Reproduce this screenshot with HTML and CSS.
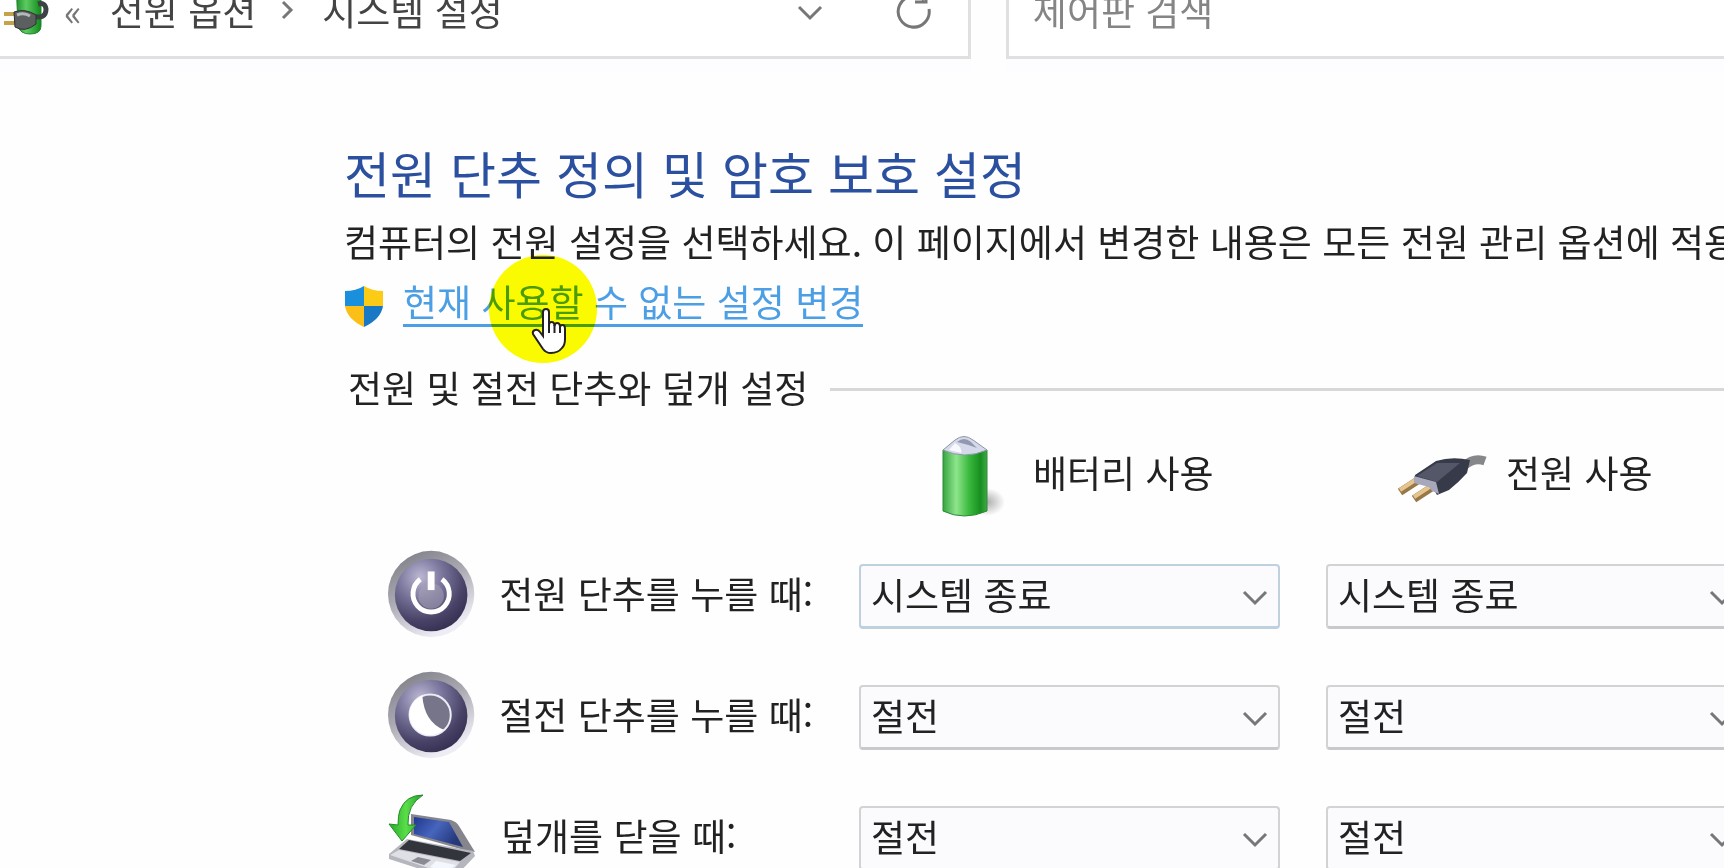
FILE: index.html
```
<!DOCTYPE html>
<html lang="ko">
<head>
    <meta charset="UTF-8">
    <meta name="viewport" content="width=device-width, initial-scale=1.0">
    <title>시스템 설정</title>
    <link rel="stylesheet" href="styles.css">
</head>
<body>
    <header class="toolbar">
        <nav class="address-bar">
            <svg class="address-icon" viewBox="0 7 50 60">
                <defs>
                    <linearGradient id="green" x1="0" x2="1">
                        <stop offset="0" stop-color="#1f8f2b"/>
                        <stop offset="0.4" stop-color="#5ccb60"/>
                        <stop offset="1" stop-color="#128a1e"/>
                    </linearGradient>
                </defs>
                <path d="M16 8 Q29 0 41 8 V53 Q41 61 30 61 Q20 61 18 53 Z" fill="url(#green)" stroke="#22812c"/>
                <path d="M32 43 Q46 47 46 36 Q45 29 38 31" fill="none" stroke="#3c4244" stroke-width="5"/>
                <path d="M4 41 H16 M4 50 H16" stroke="#c5a24c" stroke-width="4"/>
                <path d="M14 39 Q25 35 36 42 V51 Q25 60 15 54 Z" fill="#5c5f60" stroke="#2d3031"/>
                <path d="M17 42 Q24 39 30 43" fill="none" stroke="#b5b8b8" stroke-width="3"/>
            </svg>
            <span class="crumb-back">«</span>
            <a class="crumb" href="#power">전원 옵션</a>
            <svg class="crumb-arrow" viewBox="0 0 14 20"><path d="M3 2 L11 10 L3 18"/></svg>
            <a class="crumb" href="#system">시스템 설정</a>
            <button class="tool-button push" type="button" aria-label="이전 위치">
                <svg viewBox="0 0 40 40"><path d="M9 17 L20 28 L31 17"/></svg>
            </button>
            <button class="tool-button" type="button" aria-label="새로 고침">
                <svg viewBox="0 0 40 40"><path d="M35 19 A15.5 15.5 0 1 1 30 10 M32 0 V12 H21"/></svg>
            </button>
        </nav>
        <input class="search-box" type="text" placeholder="제어판 검색" aria-label="제어판 검색">
    </header>

    <main>
        <h1>전원 단추 정의 및 암호 보호 설정</h1>
        <p class="description">컴퓨터의 전원 설정을 선택하세요. 이 페이지에서 변경한 내용은 모든 전원 관리 옵션에 적용됩니다.</p>
        <div class="change-row">
            <svg class="shield" viewBox="0 0 40 42">
                <path d="M20 1 Q12 6 1 6 V21 H20 Z" fill="#1a8fdc"/>
                <path d="M20 1 Q28 6 39 6 V21 H20 Z" fill="#fccb16"/>
                <path d="M1 21 Q3 34 20 42 V21 Z" fill="#fbbf18"/>
                <path d="M39 21 Q37 34 20 42 V21 Z" fill="#1979c4"/>
            </svg>
            <a class="change-link" href="#change">현재 사용할 수 없는 설정 변경</a>
            <span class="spot"></span>
            <svg class="pointer" viewBox="0 0 36 46">
                <path d="M12 28 V4 Q12 1 15 1 Q18 1 18 4 V17 Q18 14 20.500 14 Q23.500 14 23.500 18 Q24 15 26 15 Q29 15 29 19 Q29.500 17 31.500 17 Q34 17 34 21 V31 Q34 37 31 40 Q27 45 20 45 Q15 45 12 41 L2 26 Q1 23 4 22 Q7 21 9 24 Z" fill="#fff" stroke="#222" stroke-width="2"/>
                <path d="M18 16 V25 M23.500 17 V25 M29 18 V25" stroke="#222" stroke-width="2"/>
            </svg>
        </div>

        <h2>전원 및 절전 단추와 덮개 설정</h2>

        <form class="options">
            <div class="option-row">
                <span></span>
                <div class="source battery">
                    <svg viewBox="0 -2 100 90">
                        <defs>
                            <radialGradient id="shade">
                                <stop offset="0" stop-color="#777" stop-opacity="0.6"/>
                                <stop offset="1" stop-color="#777" stop-opacity="0"/>
                            </radialGradient>
                            <linearGradient id="cell" x1="0" x2="1">
                                <stop offset="0" stop-color="#35a541"/>
                                <stop offset="0.3" stop-color="#8fe58c"/>
                                <stop offset="0.6" stop-color="#39b83d"/>
                                <stop offset="0.85" stop-color="#178f20"/>
                                <stop offset="1" stop-color="#3faa45"/>
                            </linearGradient>
                        </defs>
                        <ellipse cx="66" cy="72" rx="18" ry="14" fill="url(#shade)"/>
                        <path d="M22 20 V81 Q43 91 66 81 V20 Z" fill="url(#cell)" stroke="#2d8a39"/>
                        <path d="M22 20 L34 10 Q43 3 52 10 L66 20 Q43 30 22 20 Z" fill="#d5d9e9" stroke="#8d96a5"/>
                        <path d="M36 12 Q43 6 50 12 L56 18 Q45 14 36 12 Z" fill="#9298b2"/>
                        <path d="M34 13 Q42 18 40 23 L28 20 Z" fill="#f8f9ff"/>
                    </svg>
                    <span>배터리 사용</span>
                </div>
                <div class="source plug">
                    <svg viewBox="2 -8 100 90">
                        <path d="M72 30 Q82 21 93 25" fill="none" stroke="#85878b" stroke-width="9"/>
                        <path d="M8 56 L28 43 M22 63 L42 50" stroke="#987846" stroke-width="8"/>
                        <path d="M8 54 L28 41 M22 61 L42 48" stroke="#e5c48f" stroke-width="4"/>
                        <path d="M23 39 L44 25 Q60 20 78 24 L75 37 Q66 47 57 54 L45 59 L40 50 L22 46 Z" fill="#373a49"/>
                        <path d="M25 40 L45 27 L68 27 L45 46 Z" fill="#535768"/>
                        <path d="M22 40 L44 46 L47 58 L40 55 L37 51 L22 47 Z" fill="#a7a8bb"/>
                    </svg>
                    <span>전원 사용</span>
                </div>
            </div>

            <div class="option-row">
                <label class="option-name" for="power-battery">
                    <svg viewBox="0 0 90 90">
                        <defs>
                            <linearGradient id="ring" x1="0" y1="0" x2="0.5" y2="1">
                                <stop offset="0" stop-color="#77777f"/>
                                <stop offset="0.5" stop-color="#aaa9b2"/>
                                <stop offset="1" stop-color="#eeecf5"/>
                            </linearGradient>
                            <radialGradient id="face" cx="0.35" cy="0.25" r="0.8">
                                <stop offset="0" stop-color="#bbb7d2"/>
                                <stop offset="0.4" stop-color="#77739a"/>
                                <stop offset="0.75" stop-color="#494467"/>
                                <stop offset="1" stop-color="#353052"/>
                            </radialGradient>
                        </defs>
                        <circle cx="45" cy="45" r="44" fill="url(#ring)"/>
                        <circle cx="45" cy="46" r="37" fill="url(#face)"/>
                        <circle cx="45" cy="47" r="13" fill="#a5a3b5" opacity="0.55"/>
                        <path d="M34 30 A18.500 18.500 0 1 0 56 30" fill="none" stroke="#fff" stroke-width="5"/>
                        <path d="M45 22 V41" stroke="#fff" stroke-width="7"/>
                    </svg>
                    <span>전원 단추를 누를 때:</span>
                </label>
                <div class="picker">
                    <select class="active" id="power-battery"><option>시스템 종료</option></select>
                    <svg viewBox="0 0 26 16"><path d="M2 2 L13 13 L24 2"/></svg>
                </div>
                <div class="picker">
                    <select aria-label="전원 단추, 전원 사용"><option>시스템 종료</option></select>
                    <svg viewBox="0 0 26 16"><path d="M2 2 L13 13 L24 2"/></svg>
                </div>
            </div>

            <div class="option-row">
                <label class="option-name" for="sleep-battery">
                    <svg viewBox="0 0 90 90">
                        <circle cx="45" cy="45" r="44" fill="url(#ring)"/>
                        <circle cx="45" cy="46" r="37" fill="url(#face)"/>
                        <circle cx="44" cy="45" r="21" fill="#77758a" stroke="#eeedf5" stroke-width="2"/>
                        <path d="M36 25 A21 21 0 1 0 58 60 Q38 52 36 25 Z" fill="#fff"/>
                    </svg>
                    <span>절전 단추를 누를 때:</span>
                </label>
                <div class="picker">
                    <select id="sleep-battery"><option>절전</option></select>
                    <svg viewBox="0 0 26 16"><path d="M2 2 L13 13 L24 2"/></svg>
                </div>
                <div class="picker">
                    <select aria-label="절전 단추, 전원 사용"><option>절전</option></select>
                    <svg viewBox="0 0 26 16"><path d="M2 2 L13 13 L24 2"/></svg>
                </div>
            </div>

            <div class="option-row">
                <label class="option-name" for="lid-battery">
                    <svg viewBox="0 -2 90 90">
                        <defs>
                            <linearGradient id="screen" x1="0" x2="1" y2="0.5">
                                <stop offset="0" stop-color="#20378f"/>
                                <stop offset="0.5" stop-color="#4665bc"/>
                                <stop offset="1" stop-color="#26377a"/>
                            </linearGradient>
                            <linearGradient id="arrow" x1="0" x2="1">
                                <stop offset="0" stop-color="#26a92b"/>
                                <stop offset="0.5" stop-color="#5ade49"/>
                                <stop offset="1" stop-color="#239b2b"/>
                            </linearGradient>
                        </defs>
                        <path d="M24 21 L64 27 Q70 29 72 33 L88 59 L77 57 L24 42 Z" fill="#85868d"/>
                        <path d="M27 24 L62 29 L76 54 L27 41 Z" fill="url(#screen)"/>
                        <path d="M2 61 L20 46 L86 58 L88 63 L68 84 L58 84 L2 66 Z" fill="#b5b6be"/>
                        <path d="M12 56 L22 47 L84 60 L73 68 Z" fill="#33353d"/>
                        <path d="M3 62 L12 57 L73 69 L62 82 Z" fill="#dfe0e6"/>
                        <path d="M31 64 L44 67 L37 72 L24 68 Z" fill="#898b94"/>
                        <path d="M49 68 L69 72 L60 79 L43 74 Z" fill="#f5f7ff"/>
                        <path d="M36 2 Q19 2 13 17 Q11 22 11 32 L2 31 L15 48 L29 32 L21 32 Q20 12 36 2 Z" fill="url(#arrow)" stroke="#248b2c"/>
                    </svg>
                    <span>덮개를 닫을 때:</span>
                </label>
                <div class="picker">
                    <select id="lid-battery"><option>절전</option></select>
                    <svg viewBox="0 0 26 16"><path d="M2 2 L13 13 L24 2"/></svg>
                </div>
                <div class="picker">
                    <select aria-label="덮개, 전원 사용"><option>절전</option></select>
                    <svg viewBox="0 0 26 16"><path d="M2 2 L13 13 L24 2"/></svg>
                </div>
            </div>
        </form>
    </main>
</body>
</html>
```
FILE: styles.css
```
* {
    box-sizing: border-box;
}

body {
    font-family: "Noto Sans CJK KR", sans-serif;
    font-size: 37px;
    line-height: 50px;
    margin: 0;
    height: 100vh;
    overflow: hidden;
    background-color: #fefefe;
    color: #222;
}

h1, h2, p {
    margin: 0;
    font-weight: normal;
    white-space: nowrap;
}

/* Toolbar, partly scrolled off the top */
.toolbar {
    display: grid;
    grid-template-columns: 4fr 3fr;
    gap: 35px;
    height: 98px;
    margin-top: -39px;
    margin-right: -10px;
}

.address-bar, .search-box {
    min-width: 0;
    background-color: #fff;
    border: 3px solid #e0dfe1;
    box-shadow: 0 14px #fdfcff;
}

.address-bar {
    display: flex;
    align-items: center;
    border-left: none;
    padding-right: 34px;
}

.address-icon {
    width: 50px;
    height: 60px;
}

.crumb-back {
    margin: 0 28px 0 14px;
    color: #777;
}

.crumb {
    color: #444;
    text-decoration: none;
    white-space: nowrap;
}

.crumb-arrow {
    width: 14px;
    height: 20px;
    margin: 0 28px 0 24px;
}

.crumb-arrow path, .tool-button path, .picker path {
    fill: none;
    stroke: #777;
    stroke-width: 3;
}

.tool-button {
    width: 40px;
    height: 40px;
    padding: 0;
    border: none;
    background: none;
}

.tool-button svg {
    display: block;
}

.push {
    margin-left: auto;
    margin-right: 64px;
}

.search-box {
    font: inherit;
    padding: 0 24px;
}

.search-box::placeholder {
    color: #858585;
}

main {
    padding: 83px 0 0 344px;
}

h1 {
    font-size: 50px;
    line-height: 60px;
    color: #2b50a0;
}

.description {
    margin-top: 14px;
}

.change-row {
    position: relative;
    display: flex;
    align-items: center;
    gap: 19px;
    margin-top: 12px;
}

.shield {
    width: 40px;
    height: 42px;
    margin-top: 6px;
}

.change-link {
    line-height: 46px;
    color: #4c9fe4;
    text-decoration: none;
    border-bottom: 3px solid #4c9fe4;
}

/* Click highlight and hand over the link */
.spot {
    position: absolute;
    left: 145px;
    top: -23px;
    width: 108px;
    height: 108px;
    border-radius: 50%;
    background-color: #fbfb00;
    mix-blend-mode: multiply;
}

.pointer {
    position: absolute;
    left: 187px;
    top: 30px;
    width: 36px;
    height: 46px;
}

h2 {
    display: flex;
    align-items: center;
    gap: 22px;
    margin-top: 35px;
    padding-left: 4px;
    font-size: 37px;
}

h2::after {
    content: "";
    flex: 1;
    height: 3px;
    margin-top: 4px;
    background-color: #d8d8d8;
}

.options {
    display: grid;
    gap: 31px;
    margin-top: 16px;
}

.option-row {
    display: grid;
    grid-template-columns: 469px 421px 421px;
    column-gap: 46px;
    align-items: center;
    height: 90px;
}

.source, .option-name {
    display: flex;
    align-items: center;
    white-space: nowrap;
}

.source {
    gap: 12px;
}

.source svg {
    width: 100px;
    height: 90px;
}

.source span, .option-name span {
    padding-bottom: 3px;
}

.battery {
    padding-left: 62px;
}

.plug {
    padding-left: 68px;
}

.option-name {
    gap: 24px;
    margin-bottom: 4px;
    padding-left: 43px;
}

.option-name svg {
    width: 90px;
    height: 90px;
}

.picker {
    position: relative;
}

.picker select {
    appearance: none;
    display: block;
    width: 100%;
    height: 65px;
    padding: 0 10px 3px;
    font: inherit;
    color: #222;
    background-color: #fbfbfd;
    border: 2px solid #d3d3d5;
    border-bottom: 3px solid #c9c9cb;
    border-radius: 4px;
}

.picker .active {
    border-color: #bfd0de;
}

.picker svg {
    position: absolute;
    right: 12px;
    top: 26px;
    width: 26px;
    height: 16px;
    pointer-events: none;
}
```
